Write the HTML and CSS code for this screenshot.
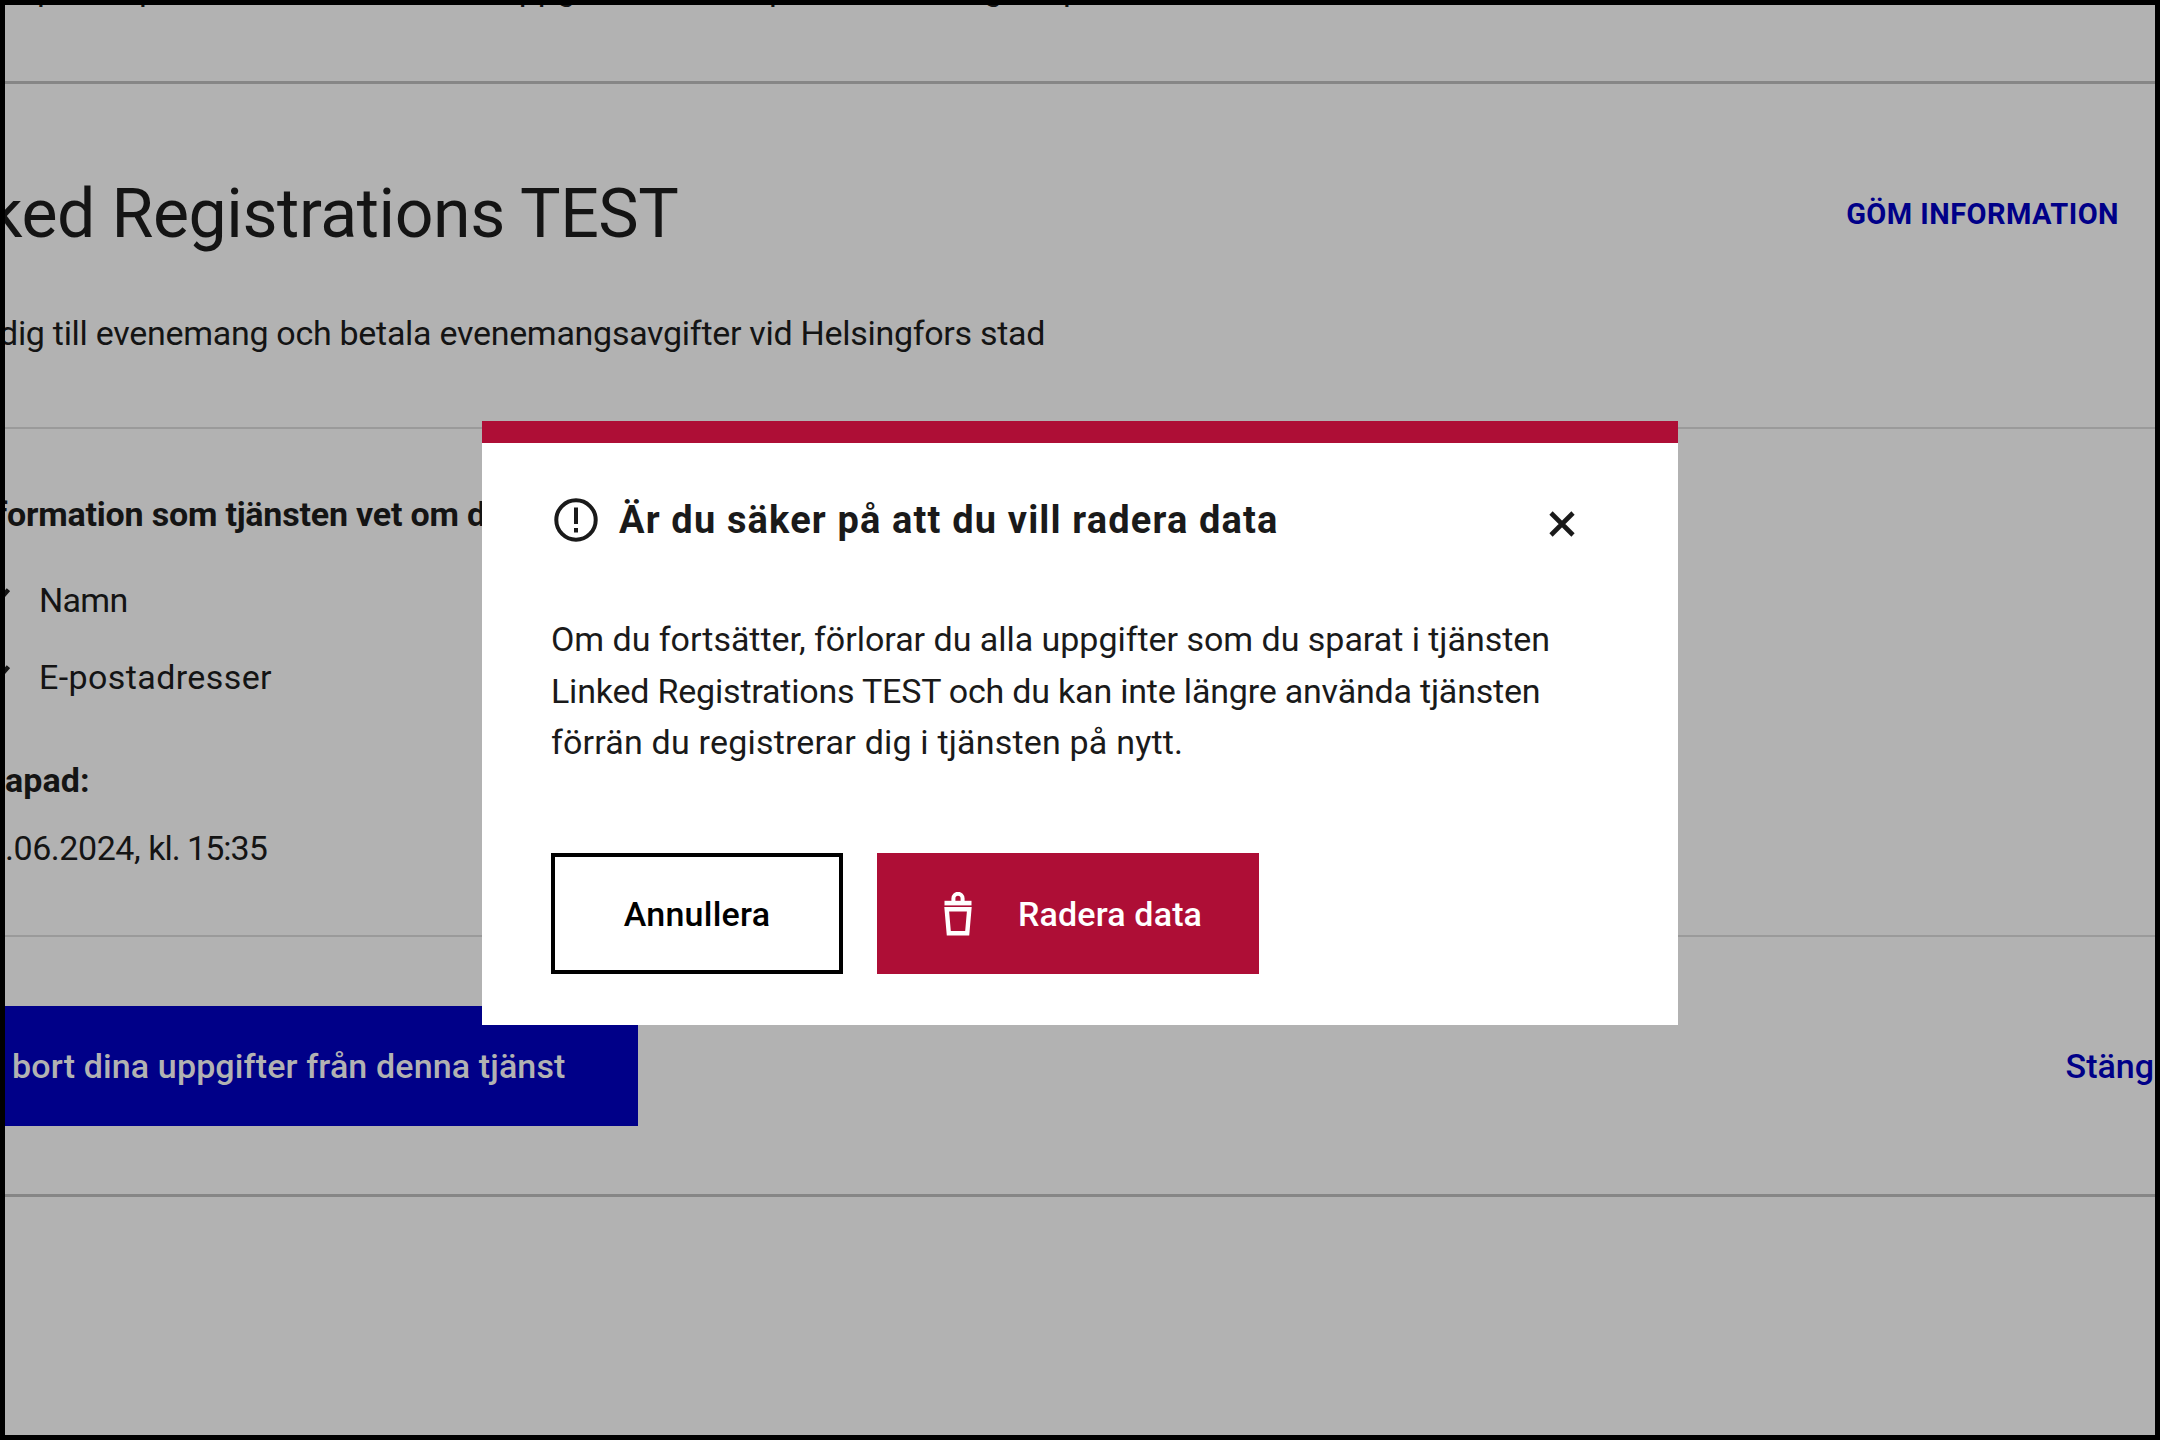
FILE: index.html
```
<!DOCTYPE html>
<html lang="sv">
<head>
<meta charset="utf-8">
<title>Är du säker på att du vill radera data</title>
<link rel="stylesheet" href="styles.css">
</head>
<body>
<div class="frame">
  <main class="page">
    <section class="previous">
      <p class="previous-text"><span>p</span><span>p</span><span>uppgifter</span><span>p</span><span>g</span><span>p</span></p>
    </section>

    <section class="service">
      <header class="service-header">
        <h1 class="service-title">ked Registrations TEST</h1>
        <button class="toggle" type="button">GÖM INFORMATION</button>
      </header>
      <p class="service-description">dig till evenemang och betala evenemangsavgifter vid Helsingfors stad</p>
    </section>

    <section class="details">
      <h2 class="details-title">formation som tjänsten vet om dig</h2>
      <ul class="details-list">
        <li class="details-item"><svg class="check" viewBox="0 0 24 24" aria-hidden="true"><path d="M3 12.5 L9 18 L22.5 2.5"/></svg><span class="name">Namn</span></li>
        <li class="details-item"><svg class="check" viewBox="0 0 24 24" aria-hidden="true"><path d="M3 12.5 L9 18 L22.5 2.5"/></svg><span class="mail">E-postadresser</span></li>
      </ul>
      <h2 class="created-title">apad:</h2>
      <p class="created-date">.06.2024, <span class="time">kl. 15:35</span></p>
    </section>

    <section class="actions">
      <button class="remove" type="button">bort dina uppgifter från denna tjänst</button>
      <button class="close-link" type="button">Stäng</button>
    </section>
  </main>

  <div class="dialog" role="dialog" aria-modal="true">
    <header class="dialog-header">
      <svg class="alert" viewBox="0 0 44 44" aria-hidden="true">
        <circle cx="22" cy="22" r="19.7"/>
        <path d="M22 9.5 V26"/>
        <path d="M22 30 V34.5"/>
      </svg>
      <h2 class="dialog-title">Är du säker på att du vill radera data</h2>
      <button class="dismiss" type="button" aria-label="Stäng">
        <svg viewBox="0 0 26 26" aria-hidden="true"><path d="M2 2 L24 24 M24 2 L2 24"/></svg>
      </button>
    </header>
    <p class="dialog-text">
      <span class="line line-1">Om du fortsätter, förlorar du alla uppgifter som du sparat i tjänsten</span>
      <span class="line line-2">Linked Registrations TEST och du kan inte längre använda tjänsten</span>
      <span class="line line-3">förrän du registrerar dig i tjänsten på nytt.</span>
    </p>
    <div class="dialog-actions">
      <button class="cancel" type="button">Annullera</button>
      <button class="delete" type="button">
        <svg class="trash" viewBox="0 0 28 44" aria-hidden="true">
          <path d="M9.4 9 V6.4 A4.6 4.6 0 0 1 18.6 6.4 V9" fill="none" stroke="currentColor" stroke-width="4"/>
          <path d="M0.5 8.8 H27.5 V13.4 H0.5 Z" fill="currentColor"/>
          <path d="M2.7 17.3 H25.3 L23.2 41.2 H4.8 Z" fill="none" stroke="currentColor" stroke-width="4.4"/>
        </svg>
        <span>Radera data</span>
      </button>
    </div>
  </div>
</div>
</body>
</html>
```
FILE: styles.css
```
* {
  box-sizing: border-box;
  margin: 0;
  padding: 0;
}

body {
  font-family: Roboto, "Liberation Sans", sans-serif;
  font-size: 34px;
  line-height: 50px;
  color: #141414;
  background: #000;
}

button {
  font: inherit;
  color: inherit;
  background: none;
  border: 0;
  white-space: nowrap;
}

h1, h2, p {
  white-space: nowrap;
}

ul {
  list-style: none;
}

.frame {
  position: relative;
  width: 2160px;
  height: 1440px;
  border: 5px solid #000;
  background: #b2b2b2;
  overflow: hidden;
}

.page {
  display: flex;
  flex-direction: column;
}

/* tail of the preceding service description */
.previous {
  height: 79px;
  border-bottom: 3px solid #868686;
}

.previous-text {
  display: flex;
  height: 3px;
  overflow: hidden;
  line-height: 0;
  padding-left: 32px;
}

.previous-text span {
  width: 102px;
  flex: none;
  line-height: 50px;
  margin-top: -42px;
}

.previous-text span:nth-child(2) {
  width: 361px;
}

.previous-text span:nth-child(3) {
  width: 269px;
}

.previous-text span:nth-child(4) {
  width: 215px;
}

.previous-text span:nth-child(5) {
  width: 79px;
}

.service {
  height: 345px;
  padding: 90px 36px 0 0;
  border-bottom: 2px solid #9a9a9a;
}

.service-header {
  display: flex;
  justify-content: space-between;
  align-items: center;
  height: 80px;
}

.service-title {
  font-size: 68px;
  font-weight: 400;
  line-height: 80px;
  letter-spacing: -0.42px;
  margin-left: -17px;
}

.toggle {
  font-size: 29px;
  font-weight: 700;
  line-height: 40px;
  letter-spacing: 0.45px;
  color: #000088;
}

.service-description {
  margin: 54px 0 0 -6px;
  letter-spacing: -0.29px;
}

.details {
  height: 508px;
  padding-top: 60px;
  border-bottom: 2px solid #9a9a9a;
}

.details-title,
.created-title {
  font-size: 34px;
  font-weight: 700;
}

.details-title {
  margin-left: -10px;
  letter-spacing: -0.2px;
}

.details-list {
  display: flex;
  flex-direction: column;
  gap: 27px;
  margin: 36px 0 53px;
}

.details-item {
  display: flex;
  align-items: center;
  gap: 29px;
  margin-left: -21px;
}

.check {
  width: 26px;
  height: 26px;
  fill: none;
  stroke: #141414;
  stroke-width: 4;
}

.name {
  letter-spacing: -0.7px;
}

.mail {
  letter-spacing: 0.4px;
}

.created-title {
  letter-spacing: 0.1px;
}

.created-date {
  margin-top: 18px;
  letter-spacing: -0.45px;
}

.time {
  letter-spacing: -1px;
}

.actions {
  display: flex;
  justify-content: space-between;
  align-items: center;
  height: 260px;
  border-bottom: 3px solid #868686;
}

.remove {
  width: 633px;
  height: 120px;
  padding-left: 7px;
  text-align: left;
  font-weight: 500;
  letter-spacing: 0.13px;
  color: #b2b2b2;
  background: #000088;
}

.close-link {
  margin-right: 1px;
  font-weight: 500;
  color: #000088;
}

.dialog {
  position: absolute;
  left: 477px;
  top: 416px;
  width: 1196px;
  height: 604px;
  padding: 55px 103px 0 69px;
  border-top: 22px solid #ae0e36;
  background: #fff;
  color: #1a1a1a;
}

.dialog-header {
  display: flex;
  align-items: center;
  height: 44px;
}

.alert {
  width: 44px;
  height: 44px;
  margin-left: 3px;
  fill: none;
  stroke: #1a1a1a;
  stroke-width: 4;
}

.dialog-title {
  flex: 1;
  margin-left: 21px;
  font-size: 38px;
  font-weight: 700;
  letter-spacing: 1.15px;
}

.dismiss {
  display: flex;
  margin-top: 7px;
}

.dismiss svg {
  width: 26px;
  height: 26px;
  fill: none;
  stroke: #1a1a1a;
  stroke-width: 4.6;
}

.dialog-text {
  margin-top: 72px;
}

.line {
  display: block;
  height: 51.5px;
  line-height: 51.5px;
}

.line-1 {
  letter-spacing: -0.03px;
}

.line-2 {
  letter-spacing: -0.2px;
}

.line-3 {
  letter-spacing: 0.19px;
}

.dialog-actions {
  display: flex;
  gap: 34px;
  margin-top: 84.5px;
}

.cancel,
.delete {
  height: 121px;
  font-weight: 500;
}

.cancel {
  width: 292px;
  border: 4px solid #000;
  color: #000;
  letter-spacing: 0.25px;
}

.delete {
  display: flex;
  align-items: center;
  width: 382px;
  padding-left: 67px;
  gap: 46px;
  letter-spacing: 0.15px;
  background: #ae0e36;
  color: #fff;
}

.trash {
  width: 28px;
  height: 44px;
}
```
